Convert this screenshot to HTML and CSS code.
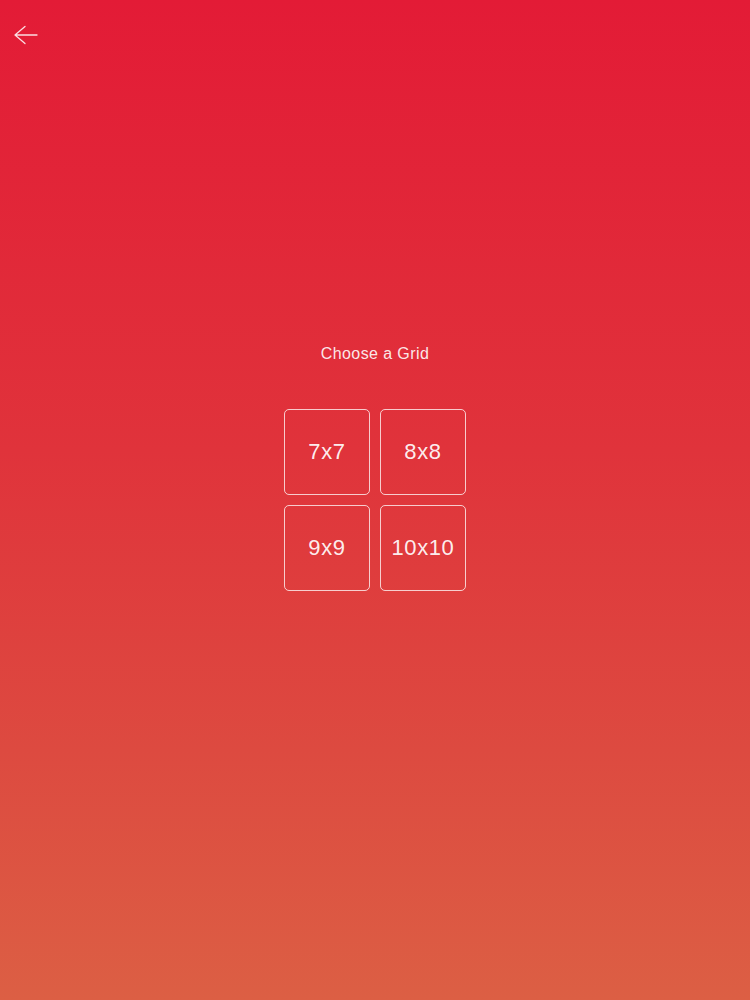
FILE: index.html
```html
<!DOCTYPE html>
<html>
<head>
<meta charset="utf-8">
<link rel="stylesheet" href="styles.css">
</head>
<body>
<div class="screen">
  <header class="topbar">
    <svg class="back" width="26" height="20" viewBox="0 0 26 20">
      <path d="M12 1.5 L2 10 L12 18.5 M2 10 H24" fill="none" stroke="rgba(255,255,255,0.85)" stroke-width="1.3" stroke-linecap="round" stroke-linejoin="round"/>
    </svg>
  </header>
  <main class="content">
    <div class="title">Choose a Grid</div>
    <div class="grid">
      <div class="cell">7x7</div>
      <div class="cell">8x8</div>
      <div class="cell">9x9</div>
      <div class="cell">10x10</div>
    </div>
  </main>
</div>
</body>
</html>
```
FILE: styles.css
```css
html, body {
  margin: 0;
  padding: 0;
}
body {
  font-family: "Liberation Sans", Arial, sans-serif;
  color: #fff;
}
.screen {
  width: 750px;
  height: 1000px;
  background: linear-gradient(to bottom, #e31b36 0%, #e0333b 45%, #dd4a40 75%, #dc5f44 100%);
  overflow: hidden;
}
.topbar {
  height: 70px;
  padding: 25px 0 0 13px;
  box-sizing: border-box;
}
.back {
  display: block;
}
.content {
  display: flex;
  flex-direction: column;
  align-items: center;
  padding-top: 275px;
}
.title {
  font-size: 16px;
  line-height: 18px;
  letter-spacing: 0.4px;
  color: rgba(255,255,255,0.9);
}
.grid {
  margin-top: 46px;
  display: grid;
  grid-template-columns: 86px 86px;
  grid-auto-rows: 86px;
  gap: 10px;
}
.cell {
  border: 1px solid rgba(255,255,255,0.75);
  border-radius: 5px;
  display: flex;
  align-items: center;
  justify-content: center;
  font-size: 22px;
  letter-spacing: 0.6px;
  color: rgba(255,255,255,0.93);
}
```
